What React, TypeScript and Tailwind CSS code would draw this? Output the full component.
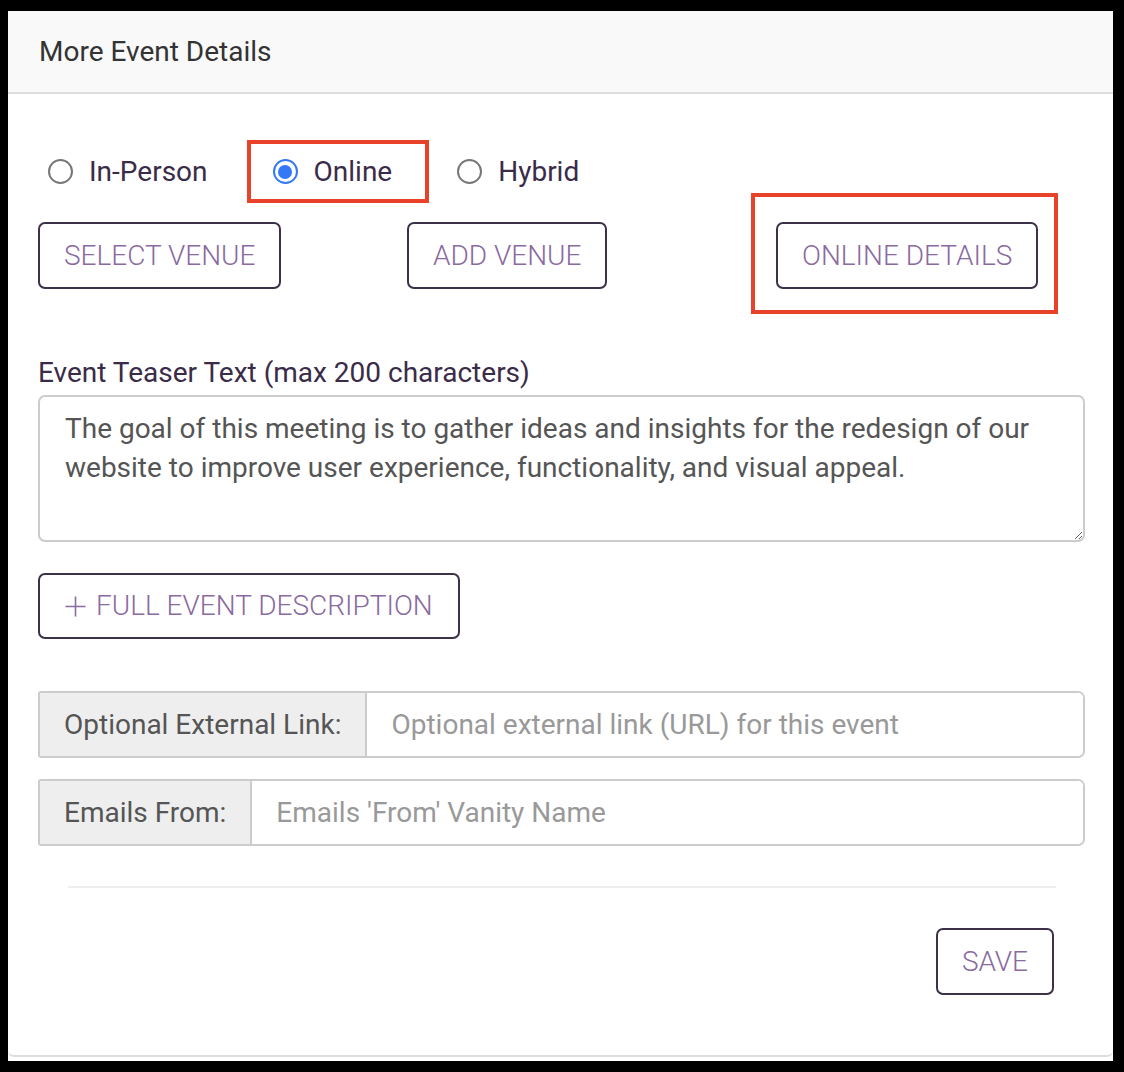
import { useState } from "react";

type Mode = "in-person" | "online" | "hybrid";

function Radio({ checked }: { checked: boolean }) {
	return checked ? (
		<span className="flex h-[25px] w-[25px] shrink-0 items-center justify-center rounded-full border-[2.5px] border-[#3478f6] bg-white">
			<span className="h-[14px] w-[14px] rounded-full bg-[#3478f6]" />
		</span>
	) : (
		<span className="h-[25px] w-[25px] shrink-0 rounded-full border-2 border-[#777] bg-white" />
	);
}

function OutlineButton({ children }: { children: React.ReactNode }) {
	return (
		<button
			type="button"
			className="flex h-[67px] items-center whitespace-nowrap rounded-[7px] border-2 border-[#3d3049] bg-white px-[24px] text-[28px] font-light uppercase text-[#8a6aa0]"
		>
			{children}
		</button>
	);
}

function InputGroup({
	label,
	placeholder,
}: {
	label: string;
	placeholder: string;
}) {
	return (
		<div className="flex h-[67px] overflow-hidden rounded-r-[7px] rounded-l-[3px] border-2 border-[#ccc]">
			<span className="flex items-center whitespace-nowrap border-r-2 border-[#ccc] bg-[#eee] px-[24px] text-[#555]">
				{label}
			</span>
			<input
				type="text"
				placeholder={placeholder}
				className="min-w-0 flex-1 bg-white px-[24px] text-[28px] text-[#555] outline-none placeholder:text-[#999]"
			/>
		</div>
	);
}

export default function App() {
	const [mode, setMode] = useState<Mode>("online");

	const options: { id: Mode; label: string }[] = [
		{ id: "in-person", label: "In-Person" },
		{ id: "online", label: "Online" },
		{ id: "hybrid", label: "Hybrid" },
	];

	return (
		<div className="min-h-[1072px] bg-black pt-[11px] pl-[8px] pr-[11px] pb-[11px] font-['Roboto',sans-serif] text-[28px]">
			<div className="bg-white pb-[4px]">
				<div className="rounded-b-[6px] border-b-2 border-[#ddd]">
					<div className="flex h-[83px] items-center border-b-2 border-[#ddd] bg-[#f9f9f9] pl-[31px] text-[#333]">
						More Event Details
					</div>

					<div className="pl-[30px] pr-[28px] pt-[46px] pb-[60px]">
						{/* venue type */}
						<div className="ml-[10px] flex h-[63px] items-center gap-[65px]">
							{options.map((o) => (
								<label
									key={o.id}
									onClick={() => setMode(o.id)}
									className="relative flex h-full cursor-pointer items-center gap-[16px] text-[#3a2c48]"
								>
									<Radio checked={mode === o.id} />
									<span>{o.label}</span>
									{o.id === "online" && (
										<span className="pointer-events-none absolute top-0 bottom-0 left-[-26px] right-[-37px] border-4 border-[#e8432a]" />
									)}
								</label>
							))}
						</div>

						<div className="mt-[19px] grid grid-cols-3 gap-x-[60px]">
							<div className="flex">
								<OutlineButton>Select Venue</OutlineButton>
							</div>
							<div className="flex">
								<OutlineButton>Add Venue</OutlineButton>
							</div>
							<div className="flex">
								<div className="relative">
									<OutlineButton>Online Details</OutlineButton>
									<span className="pointer-events-none absolute top-[-29px] bottom-[-25px] left-[-25px] right-[-20px] border-4 border-[#e8432a]" />
								</div>
							</div>
						</div>

						<div className="mt-[64px] leading-[40px] text-[#3a2c48]">
							Event Teaser Text (max 200 characters)
						</div>
						<textarea
							className="mt-[2px] block h-[147px] w-full resize-y rounded-[7px] border-2 border-[#ccc] px-[25px] pt-[12px] text-[28px] leading-[39px] text-[#555] outline-none"
							defaultValue="The goal of this meeting is to gather ideas and insights for the redesign of our website to improve user experience, functionality, and visual appeal."
						/>

						<div className="mt-[31px] flex">
							<button
								type="button"
								className="flex h-[66px] items-center gap-[9px] whitespace-nowrap rounded-[7px] border-2 border-[#3d3049] bg-white pl-[24px] pr-[25px] text-[28px] font-light text-[#8a6aa0]"
							>
								<svg
									width="23"
									height="23"
									viewBox="0 0 23 23"
									fill="none"
									stroke="#8a6aa0"
									strokeWidth="1.6"
								>
									<path d="M11.5 1.5v20M1.5 11.5h20" />
								</svg>
								FULL EVENT DESCRIPTION
							</button>
						</div>

						<div className="mt-[52px]">
							<InputGroup
								label="Optional External Link:"
								placeholder="Optional external link (URL) for this event"
							/>
						</div>
						<div className="mt-[21px]">
							<InputGroup
								label="Emails From:"
								placeholder="Emails 'From' Vanity Name"
							/>
						</div>

						<div className="mt-[40px] ml-[30px] mr-[29px] h-[2px] bg-[#eee]" />

						<div className="mt-[40px] mr-[31px] flex justify-end">
							<OutlineButton>Save</OutlineButton>
						</div>
					</div>
				</div>
			</div>
		</div>
	);
}
